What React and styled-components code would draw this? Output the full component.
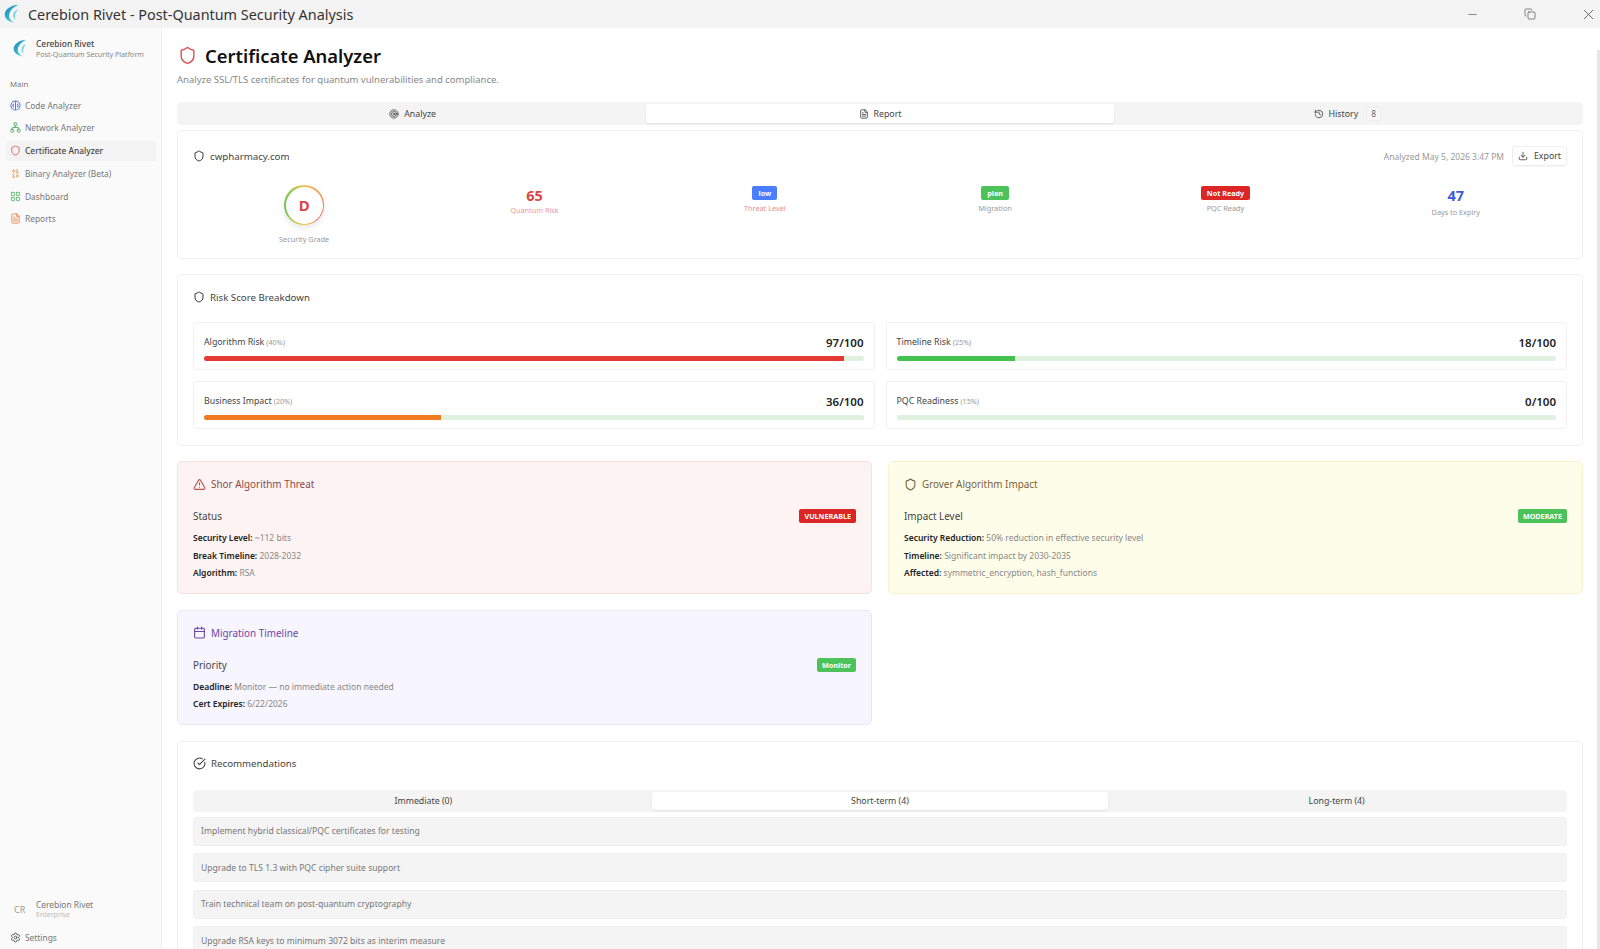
import React from "react";
import styled, { createGlobalStyle } from "styled-components";
import {
  Shield, Target, FileText, History, Download, TriangleAlert, Calendar,
  CircleCheckBig, Network, Binary, LayoutGrid, Settings, Minus, X, Copy,
} from "lucide-react";

const GlobalStyle = createGlobalStyle`
  html, body { margin: 0; height: 100%; background: #fff; }
  body { font-family: "Noto Sans", "Open Sans", sans-serif; color: #2b2b2b; overflow: hidden; }
  * { box-sizing: border-box; }
`;

const Win = styled.div`
  height: 949px;
  display: flex;
  flex-direction: column;
`;

const TitleBar = styled.header`
  height: 28px;
  flex: none;
  background: #f3f3f3;
  display: flex;
  align-items: center;
  padding-left: 4px;
`;

const TitleText = styled.div`
  margin-left: 9px;
  font-size: 14.4px;
  color: #333;
  flex: 1;
`;

const WinButtons = styled.div`
  display: flex;
  gap: 34px;
`;

const WinButton = styled.div`
  width: 24px;
  display: flex;
  align-items: center;
  justify-content: center;
  color: #555;
`;

const Body = styled.div`
  flex: 1;
  display: flex;
  min-height: 0;
`;

const Sidebar = styled.aside`
  width: 162px;
  flex: none;
  background: #fafafa;
  border-right: 1px solid #eeeeee;
  display: flex;
  flex-direction: column;
`;

const Brand = styled.div`
  display: flex;
  align-items: center;
  gap: 9px;
  padding: 10px 0 1px 13px;
`;

const BrandName = styled.div`
  font-size: 8.4px;
  line-height: 11px;
  font-weight: 500;
  color: #444;
`;

const BrandSub = styled.div`
  font-size: 7.1px;
  line-height: 10px;
  color: #888;
`;

const NavLabel = styled.div`
  font-size: 7.8px;
  line-height: 12px;
  color: #777;
  margin: 18px 0 5px 10px;
`;

const Nav = styled.nav`
  display: flex;
  flex-direction: column;
  gap: 2.8px;
  padding: 0 6px;
`;

const NavItem = styled.div`
  height: 20px;
  display: flex;
  align-items: center;
  gap: 4px;
  padding-left: 4px;
  border-radius: 3px;
  font-size: 8.4px;
  color: ${(p) => (p.$active ? "#444" : "#777")};
  font-weight: ${(p) => (p.$active ? 500 : 400)};
  background: ${(p) => (p.$active ? "#f3f3f3" : "transparent")};
  width: 150px;
`;

const SideFooter = styled.div`
  margin-top: auto;
  padding-bottom: 2px;
`;

const UserRow = styled.div`
  display: flex;
  align-items: center;
  padding-left: 14px;
  gap: 10px;
  margin-bottom: 7.5px;
`;

const Avatar = styled.div`
  font-size: 9px;
  color: #999;
  width: 12px;
`;

const UserName = styled.div`
  font-size: 8.4px;
  line-height: 11px;
  color: #777;
`;

const UserPlan = styled.div`
  font-size: 7px;
  line-height: 10px;
  color: #bbb;
`;

const Main = styled.main`
  flex: 1;
  min-width: 0;
  padding: 15px 14px 0 15px;
  overflow: hidden;
`;

const ScrollTrack = styled.div`
  width: 3px;
  flex: none;
  margin-top: 22px;
  background: #e6e6e6;
`;

const PageTitle = styled.div`
  display: flex;
  align-items: center;
  gap: 8px;
  height: 24px;
  padding-left: 1px;
  color: #d9534f;
`;

const H1 = styled.h1`
  margin: 0;
  font-size: 18.4px;
  font-weight: 600;
  color: #111;
`;

const PageSub = styled.p`
  margin: 6px 0 15px;
  font-size: 9.5px;
  line-height: 14px;
  color: #888;
`;

const TabList = styled.div`
  height: ${(p) => p.$h || 23}px;
  background: #f4f4f4;
  border-radius: 4px;
  padding: 2px;
  display: grid;
  grid-template-columns: repeat(3, 1fr);
`;

const Tab = styled.div`
  display: flex;
  align-items: center;
  justify-content: center;
  gap: 5px;
  font-size: 8.8px;
  color: #444;
  border-radius: 3px;
  background: ${(p) => (p.$active ? "#fff" : "transparent")};
  box-shadow: ${(p) => (p.$active ? "0 1px 2px rgba(0,0,0,.08)" : "none")};
`;

const CountTag = styled.span`
  font-size: 8.4px;
  color: #666;
  background: #f8f8f8;
  border: 1px solid #eee;
  border-radius: 3px;
  width: 15px;
  height: 14px;
  margin-left: 3px;
  display: flex;
  align-items: center;
  justify-content: center;
`;

const Card = styled.section`
  margin-top: ${(p) => p.$mt || 15}px;
  border: 1px solid #efefef;
  border-radius: 5px;
  background: #fff;
  padding: 15px 15px ${(p) => p.$pb || 15}px;
`;

const CardHead = styled.div`
  display: flex;
  align-items: center;
  justify-content: space-between;
  height: ${(p) => p.$h || 14}px;
  margin-bottom: ${(p) => p.$mb || 18}px;
`;

const HeadTitle = styled.div`
  display: flex;
  align-items: center;
  gap: 5px;
  font-size: 9.7px;
  color: #444;
`;

const HeadRight = styled.div`
  display: flex;
  align-items: center;
  gap: 8px;
  font-size: 8.5px;
  color: #999;
`;

const ExportBtn = styled.div`
  display: flex;
  align-items: center;
  gap: 6px;
  height: 20px;
  width: 55px;
  justify-content: center;
  border: 1px solid #eee;
  border-radius: 3px;
  box-shadow: 0 1px 1px rgba(0,0,0,.04);
  font-size: 8.8px;
  color: #444;
`;

const Stats = styled.div`
  display: grid;
  grid-template-columns: repeat(6, 1fr);
  margin: 0 -4px;
`;

const Stat = styled.div`
  display: flex;
  flex-direction: column;
  align-items: center;
`;

const Ring = styled.div`
  width: 40px;
  height: 40px;
  border-radius: 50%;
  padding: 1.5px;
  background: conic-gradient(from 0deg, #f2c14e, #ee7c50 90deg, #ea6a5a 130deg, #f2c94c 180deg, #6cc25a 250deg, #8cc85a 310deg, #f2c14e);
  box-shadow: 0 3px 6px rgba(0,0,0,.1);
  margin-bottom: 8px;
`;

const RingInner = styled.div`
  width: 100%;
  height: 100%;
  background: #fff;
  border-radius: 50%;
  display: flex;
  align-items: center;
  justify-content: center;
  font-size: 15px;
  font-weight: 700;
  color: #d9474a;
`;

const StatValue = styled.div`
  height: 18px;
  line-height: 18px;
  margin-top: 1px;
  font-size: 14.5px;
  font-weight: 700;
  color: ${(p) => p.$color};
`;

const StatLabel = styled.div`
  font-size: 7.3px;
  line-height: 12px;
  margin-top: ${(p) => p.$mt || 0}px;
  color: ${(p) => p.$color || "#999"};
`;

const Badge = styled.span`
  display: inline-flex;
  align-items: center;
  justify-content: center;
  height: ${(p) => p.$h || 14}px;
  padding: 0 ${(p) => p.$px || 6}px;
  border-radius: 2px;
  font-size: 7.2px;
  font-weight: 700;
  color: #fff;
  background: ${(p) => p.$bg};
`;

const StatBadge = styled(Badge)`
  margin-top: 1px;
  margin-bottom: 2px;
`;

const ScoreGrid = styled.div`
  display: grid;
  grid-template-columns: 1fr 1fr;
  column-gap: 11px;
  row-gap: 11px;
`;

const Score = styled.div`
  border: 1px solid #f1f1f1;
  border-radius: 3px;
  padding: 12px 10px 8px;
`;

const ScoreTop = styled.div`
  height: 14px;
  display: flex;
  align-items: center;
  justify-content: space-between;
  font-size: 8.8px;
  color: #444;
  margin-bottom: 7px;
`;

const Weight = styled.span`
  font-size: 7.2px;
  color: #999;
  margin-left: 2px;
`;

const ScoreNum = styled.span`
  font-size: 11.5px;
  font-weight: 600;
  color: #222;
`;

const Track = styled.div`
  height: 5px;
  border-radius: 3px;
  background: #dff2e0;
  overflow: hidden;
`;

const Fill = styled.div`
  height: 100%;
  background: ${(p) => p.$bg};
`;

const Panels = styled.div`
  margin-top: 15px;
  display: grid;
  grid-template-columns: 1fr 1fr;
  gap: 16px;
`;

const Panel = styled.div`
  border: 1px solid ${(p) => p.$border};
  background: ${(p) => p.$bg};
  border-radius: 5px;
  padding: 15px 15px 11px;
`;

const PanelHead = styled.div`
  height: 14px;
  display: flex;
  align-items: center;
  gap: 5px;
  font-size: 9.9px;
  color: ${(p) => p.$color};
  margin-bottom: 15px;
`;

const PanelRow = styled.div`
  height: 20px;
  display: flex;
  align-items: center;
  justify-content: space-between;
  font-size: 9.9px;
  color: #444;
  margin-bottom: 3px;
`;

const Line = styled.div`
  font-size: 8.5px;
  line-height: 17.6px;
  color: #888;
  b { color: #222; font-weight: 600; }
`;

const RecList = styled.div`
  margin-top: 5px;
  display: flex;
  flex-direction: column;
  gap: 7.5px;
`;

const RecItem = styled.div`
  height: 29px;
  display: flex;
  align-items: center;
  padding-left: 7px;
  background: #f4f4f4;
  border: 1px solid #f0f0f0;
  border-radius: 3px;
  font-size: 8.6px;
  color: #777;
`;

const Logo = ({ size = 16 }) => (
  <svg width={size} height={size * 1.3} viewBox="0 0 20 26" fill="none">
    <defs>
      <linearGradient id="lg" x1="0" y1="0" x2="1" y2="1">
        <stop offset="0" stopColor="#1f7fb8" />
        <stop offset="0.6" stopColor="#35c0cf" />
        <stop offset="1" stopColor="#a8e8ee" />
      </linearGradient>
    </defs>
    <path d="M19 1C10 1 1 7 1 14c0 6 6 10 13 11-5-3-8-6-7-11 1-6 6-10 12-13z" fill="url(#lg)" />
    <path d="M19 7c-4 1-7 4-7 8 0 2 1 4 3 6-1-5 0-10 4-14z" fill="#7fd6e2" />
  </svg>
);

const CodeIcon = () => (
  <svg width="11" height="11" viewBox="0 0 24 24" fill="none" stroke="#4f7fe0" strokeWidth="2.2" strokeLinecap="round" strokeLinejoin="round">
    <circle cx="12" cy="12" r="10" />
    <path d="M12 3v18M8 9l-2 3 2 3M16 9l2 3-2 3" />
  </svg>
);

const navItems = [
  { label: "Code Analyzer", icon: <CodeIcon /> },
  { label: "Network Analyzer", icon: <Network size={11} color="#55b06a" /> },
  { label: "Certificate Analyzer", icon: <Shield size={11} color="#d9635f" />, active: true },
  { label: "Binary Analyzer (Beta)", icon: <Binary size={11} color="#ee9a5a" /> },
  { label: "Dashboard", icon: <LayoutGrid size={11} color="#62bb6e" /> },
  { label: "Reports", icon: <FileText size={11} color="#e8894f" /> },
];

const scores = [
  { name: "Algorithm Risk", weight: "40%", value: 97, color: "#e53935" },
  { name: "Timeline Risk", weight: "25%", value: 18, color: "#43c24f" },
  { name: "Business Impact", weight: "20%", value: 36, color: "#f07a1f" },
  { name: "PQC Readiness", weight: "15%", value: 0, color: "#43c24f" },
];

const recs = [
  "Implement hybrid classical/PQC certificates for testing",
  "Upgrade to TLS 1.3 with PQC cipher suite support",
  "Train technical team on post-quantum cryptography",
  "Upgrade RSA keys to minimum 3072 bits as interim measure",
];

export default function App() {
  return (
    <Win>
      <GlobalStyle />
      <TitleBar>
        <Logo size={15} />
        <TitleText>Cerebion Rivet - Post-Quantum Security Analysis</TitleText>
        <WinButtons>
          <WinButton><Minus size={13} strokeWidth={1.2} /></WinButton>
          <WinButton><Copy size={12} strokeWidth={1.4} /></WinButton>
          <WinButton><X size={17} strokeWidth={1.2} /></WinButton>
        </WinButtons>
      </TitleBar>
      <Body>
        <Sidebar>
          <Brand>
            <Logo size={14} />
            <div>
              <BrandName>Cerebion Rivet</BrandName>
              <BrandSub>Post-Quantum Security Platform</BrandSub>
            </div>
          </Brand>
          <NavLabel>Main</NavLabel>
          <Nav>
            {navItems.map((item) => (
              <NavItem key={item.label} $active={item.active}>
                {item.icon}
                {item.label}
              </NavItem>
            ))}
          </Nav>
          <SideFooter>
            <UserRow>
              <Avatar>CR</Avatar>
              <div>
                <UserName>Cerebion Rivet</UserName>
                <UserPlan>Enterprise</UserPlan>
              </div>
            </UserRow>
            <Nav>
              <NavItem>
                <Settings size={11} color="#555" />
                Settings
              </NavItem>
            </Nav>
          </SideFooter>
        </Sidebar>

        <Main>
          <PageTitle>
            <Shield size={19} strokeWidth={1.8} />
            <H1>Certificate Analyzer</H1>
          </PageTitle>
          <PageSub>Analyze SSL/TLS certificates for quantum vulnerabilities and compliance.</PageSub>

          <TabList>
            <Tab><Target size={10} />Analyze</Tab>
            <Tab $active><FileText size={10} />Report</Tab>
            <Tab><History size={10} />History<CountTag>8</CountTag></Tab>
          </TabList>

          <Card $mt={5} $pb={13}>
            <CardHead $h={20} $mb={19}>
              <HeadTitle><Shield size={12} color="#333" />cwpharmacy.com</HeadTitle>
              <HeadRight>
                Analyzed May 5, 2026 3:47 PM
                <ExportBtn><Download size={10} />Export</ExportBtn>
              </HeadRight>
            </CardHead>
            <Stats>
              <Stat>
                <Ring><RingInner>D</RingInner></Ring>
                <StatLabel>Security Grade</StatLabel>
              </Stat>
              <Stat>
                <StatValue $color="#d9474a">65</StatValue>
                <StatLabel $color="#ee9a9a">Quantum Risk</StatLabel>
              </Stat>
              <Stat>
                <StatBadge $bg="#4a7dff">low</StatBadge>
                <StatLabel $color="#e58f8f">Threat Level</StatLabel>
              </Stat>
              <Stat>
                <StatBadge $bg="#4cc35a">plan</StatBadge>
                <StatLabel>Migration</StatLabel>
              </Stat>
              <Stat>
                <StatBadge $bg="#dc2626">Not Ready</StatBadge>
                <StatLabel>PQC Ready</StatLabel>
              </Stat>
              <Stat>
                <StatValue $color="#3b5bdb">47</StatValue>
                <StatLabel $mt={2}>Days to Expiry</StatLabel>
              </Stat>
            </Stats>
          </Card>

          <Card $pb={16}>
            <CardHead>
              <HeadTitle><Shield size={12} color="#333" />Risk Score Breakdown</HeadTitle>
            </CardHead>
            <ScoreGrid>
              {scores.map((s) => (
                <Score key={s.name}>
                  <ScoreTop>
                    <span>{s.name}<Weight>({s.weight})</Weight></span>
                    <ScoreNum>{s.value}/100</ScoreNum>
                  </ScoreTop>
                  <Track>
                    <Fill $bg={s.color} style={{ width: `${s.value}%` }} />
                  </Track>
                </Score>
              ))}
            </ScoreGrid>
          </Card>

          <Panels>
            <Panel $bg="#fdf3f2" $border="#f9e0dd">
              <PanelHead $color="#8a4a4a"><TriangleAlert size={13} color="#b8504f" />Shor Algorithm Threat</PanelHead>
              <PanelRow>Status<Badge $bg="#dc2626" $px={5}>VULNERABLE</Badge></PanelRow>
              <Line><b>Security Level:</b> ~112 bits</Line>
              <Line><b>Break Timeline:</b> 2028-2032</Line>
              <Line><b>Algorithm:</b> RSA</Line>
            </Panel>
            <Panel $bg="#fefde9" $border="#f7f3cf">
              <PanelHead $color="#7a5f3a"><Shield size={13} color="#7a5f3a" />Grover Algorithm Impact</PanelHead>
              <PanelRow>Impact Level<Badge $bg="#4cc35a" $px={5}>MODERATE</Badge></PanelRow>
              <Line><b>Security Reduction:</b> 50% reduction in effective security level</Line>
              <Line><b>Timeline:</b> Significant impact by 2030-2035</Line>
              <Line><b>Affected:</b> symmetric_encryption, hash_functions</Line>
            </Panel>
            <Panel $bg="#f7f5fd" $border="#ece7f8">
              <PanelHead $color="#6b46a8"><Calendar size={13} color="#6b46a8" />Migration Timeline</PanelHead>
              <PanelRow>Priority<Badge $bg="#4cc35a" $px={5}>Monitor</Badge></PanelRow>
              <Line><b>Deadline:</b> Monitor — no immediate action needed</Line>
              <Line><b>Cert Expires:</b> 6/22/2026</Line>
            </Panel>
          </Panels>

          <Card $mt={16}>
            <CardHead $mb={19}>
              <HeadTitle><CircleCheckBig size={13} color="#444" />Recommendations</HeadTitle>
            </CardHead>
            <TabList $h={22}>
              <Tab>Immediate (0)</Tab>
              <Tab $active>Short-term (4)</Tab>
              <Tab>Long-term (4)</Tab>
            </TabList>
            <RecList>
              {recs.map((r) => <RecItem key={r}>{r}</RecItem>)}
            </RecList>
          </Card>
        </Main>
        <ScrollTrack />
      </Body>
    </Win>
  );
}
